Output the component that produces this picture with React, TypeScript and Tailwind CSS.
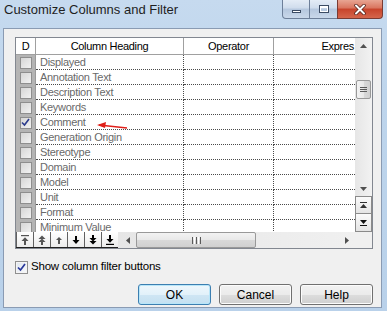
import React from "react";

const rows = [
  "Displayed",
  "Annotation Text",
  "Description Text",
  "Keywords",
  "Comment",
  "Generation Origin",
  "Stereotype",
  "Domain",
  "Model",
  "Unit",
  "Format",
  "Minimum Value",
];

function GridCheck({ checked }: { checked?: boolean }) {
  return (
    <div className="w-[12px] h-[12px] border border-[#8e8e8e] bg-[linear-gradient(135deg,#d6d6d6,#f2f2f2)] flex items-center justify-center">
      {checked && (
        <svg width="9" height="9" viewBox="0 0 9 9">
          <path d="M1 4.5 L3.5 7 L8 1" stroke="#2a3a8c" strokeWidth="1.6" fill="none" />
        </svg>
      )}
    </div>
  );
}

function Tri({ dir, color = "#3c3c3c" }: { dir: "up" | "down" | "left" | "right"; color?: string }) {
  const p =
    dir === "up"
      ? "M0 4 L3.5 0 L7 4 Z"
      : dir === "down"
      ? "M0 0 L7 0 L3.5 4 Z"
      : dir === "left"
      ? "M4 0 L4 7 L0 3.5 Z"
      : "M0 0 L0 7 L4 3.5 Z";
  const w = dir === "up" || dir === "down" ? 7 : 4;
  const h = dir === "up" || dir === "down" ? 4 : 7;
  return (
    <svg width={w} height={h} viewBox={`0 0 ${w} ${h}`}>
      <path d={p} fill={color} />
    </svg>
  );
}

function ToolIcon({ kind }: { kind: number }) {
  const gray = "#555";
  const black = "#000";
  const c = kind < 3 ? gray : black;
  let el: React.ReactNode = null;
  if (kind === 0)
    el = (
      <>
        <rect x="0" y="0" width="8" height="1.2" fill={c} />
        <path d="M0.5 6 L4 2.2 L7.5 6 Z" fill={c} />
        <rect x="3" y="6" width="2" height="4" fill={c} />
      </>
    );
  if (kind === 1)
    el = (
      <>
        <path d="M0.5 4 L4 0.5 L7.5 4 Z" fill={c} />
        <path d="M0.5 7 L4 3.5 L7.5 7 Z" fill={c} />
        <rect x="3" y="7" width="2" height="3" fill={c} />
      </>
    );
  if (kind === 2)
    el = (
      <>
        <path d="M1 5 L4 2 L7 5 Z" fill={c} />
        <rect x="3" y="5" width="2" height="4" fill={c} />
      </>
    );
  if (kind === 3)
    el = (
      <>
        <rect x="3" y="1" width="2" height="4" fill={c} />
        <path d="M0.5 5 L7.5 5 L4 9 Z" fill={c} />
      </>
    );
  if (kind === 4)
    el = (
      <>
        <rect x="3" y="0" width="2" height="3" fill={c} />
        <path d="M0.5 3 L7.5 3 L4 6.5 Z" fill={c} />
        <path d="M0.5 6 L7.5 6 L4 9.5 Z" fill={c} />
      </>
    );
  if (kind === 5)
    el = (
      <>
        <rect x="3" y="0" width="2" height="4" fill={c} />
        <path d="M0.5 4 L7.5 4 L4 7.8 Z" fill={c} />
        <rect x="0" y="8.8" width="8" height="1.2" fill={c} />
      </>
    );
  return (
    <svg width="8" height="10" viewBox="0 0 8 10">
      {el}
    </svg>
  );
}

function WinButton({ label, def }: { label: string; def?: boolean }) {
  return (
    <div
      className={
        "w-[73px] h-[21px] rounded-[3px] border flex items-center justify-center text-[12px] text-black " +
        (def
          ? "border-[#3c7fb1] shadow-[inset_0_0_0_1px_#b8e6f9] bg-[linear-gradient(180deg,#eef7fc_0%,#e2f1fa_50%,#cfe6f4_51%,#c4e0f1_100%)]"
          : "border-[#707070] shadow-[inset_0_0_0_1px_#fcfcfc] bg-[linear-gradient(180deg,#f2f2f2_0%,#ebebeb_50%,#dddddd_51%,#cfcfcf_100%)]")
      }
    >
      {label}
    </div>
  );
}

export default function App() {
  return (
    <div className="w-[387px] h-[311px] relative overflow-hidden flex flex-col bg-[linear-gradient(180deg,#c6daef_0%,#bed5ec_30%,#b9d1ea_100%)] font-['Liberation_Sans',Arial,sans-serif]">
      {/* Title bar */}
      <div className="h-[28px] flex items-start shrink-0">
        <div className="pl-[4px] pt-[2px] text-[13px] text-[#1e1e1e] leading-[16px]">
          Customize Columns and Filter
        </div>
        <div className="ml-auto mr-[4px] flex h-[19px]">
          <div className="w-[28px] h-[19px] border border-[#6d7f99] border-t-0 rounded-bl-[4px] bg-[linear-gradient(180deg,#e4ecf6_0%,#cfdcec_45%,#b5c7de_50%,#c9d8ea_100%)] flex items-center justify-center">
            <div className="w-[9px] h-[3px] bg-white border border-[#3b4b63] mt-[5px]" />
          </div>
          <div className="w-[27px] h-[19px] border-b border-[#6d7f99] bg-[linear-gradient(180deg,#e4ecf6_0%,#cfdcec_45%,#b5c7de_50%,#c9d8ea_100%)] flex items-center justify-center">
            <div className="w-[10px] h-[8px] border border-[#3b4b63] bg-transparent shadow-[inset_0_2px_0_#ffffff,inset_0_0_0_1px_#ffffff]" />
          </div>
          <div className="w-[46px] h-[19px] border border-[#7a3b33] border-t-0 rounded-br-[4px] bg-[linear-gradient(180deg,#e8a593_0%,#d9745e_45%,#c7432b_50%,#d5664c_100%)] flex items-center justify-center">
            <svg width="12" height="11" viewBox="0 0 12 11">
              <path d="M2 1.5 L10 9.5 M10 1.5 L2 9.5" stroke="#4a1a14" strokeWidth="3.4" strokeLinecap="round" />
              <path d="M2 1.5 L10 9.5 M10 1.5 L2 9.5" stroke="#ffffff" strokeWidth="2" strokeLinecap="round" />
            </svg>
          </div>
        </div>
      </div>

      {/* Client area */}
      <div className="ml-[3px] w-[379px] h-[280px] border border-[#8a9bb3] bg-[#f0f0f0] flex flex-col pl-[11px] pt-[8px] pr-[8px]">
        {/* Grid */}
        <div className="relative w-[358px] h-[212px] border border-[#828790] bg-white flex text-[11px] tracking-[-0.3px]">
          {/* main */}
          <div className="w-[339px] flex flex-col">
            {/* header */}
            <div className="h-[17px] flex border-b border-[#a0a0a0] bg-white text-black shrink-0">
              <div className="w-[20px] border-r border-[#a0a0a0] flex items-center justify-center">D</div>
              <div className="w-[148px] border-r border-[#a0a0a0] flex items-center justify-center">Column Heading</div>
              <div className="w-[90px] border-r border-[#a0a0a0] flex items-center justify-center">Operator</div>
              <div className="w-[81px] flex items-center justify-end pr-[1px] overflow-hidden">Expres</div>
            </div>
            {/* rows */}
            <div className="h-[177px] overflow-hidden flex flex-col shrink-0">
              {rows.map((r, i) => (
                <div key={r} className="h-[15px] flex shrink-0">
                  <div className="w-[20px] h-[15px] border-r border-[#9a9a9a] bg-[#b4b4b4] flex items-center justify-center">
                    <GridCheck checked={i === 4} />
                  </div>
                  <div className="w-[148px] border-r border-b border-dotted border-[#4a4a4a] flex items-center pl-[4px] text-[#6a6a6a] leading-[14px]">
                    {r}
                  </div>
                  <div className="w-[90px] border-r border-b border-dotted border-[#4a4a4a]" />
                  <div className="w-[81px] border-b border-dotted border-[#4a4a4a]" />
                </div>
              ))}
            </div>
            {/* bottom toolbar + hscroll */}
            <div className="h-[16px] flex shrink-0 bg-[#f0f0f0]">
              <div className="flex border-b border-[#202020]">
                {[0, 1, 2, 3, 4, 5].map((k) => (
                  <div
                    key={k}
                    className="w-[17px] h-[15px] bg-[linear-gradient(180deg,#ffffff,#ececec)] border-l border-[#606060] flex items-center justify-center"
                  >
                    <ToolIcon kind={k} />
                  </div>
                ))}
              </div>
              <div className="flex-1 flex items-center bg-[linear-gradient(90deg,#e6e6e6,#f0f0f0)] pl-[1px]">
                <div className="w-[17px] h-[16px] flex items-center justify-center">
                  <Tri dir="left" color="#505050" />
                </div>
                <div className="w-[120px] h-[16px] rounded-[2px] border border-[#999999] bg-[linear-gradient(180deg,#f3f3f3_0%,#e8e8e8_50%,#d9d9d9_51%,#d0d0d0_100%)] flex items-center justify-center">
                  <div className="flex gap-[1px]">
                    <div className="w-[1px] h-[7px] bg-[#5a5a5a]" />
                    <div className="w-[1px] h-[7px] bg-white" />
                    <div className="w-[1px] h-[7px] bg-[#5a5a5a]" />
                    <div className="w-[1px] h-[7px] bg-white" />
                    <div className="w-[1px] h-[7px] bg-[#5a5a5a]" />
                  </div>
                </div>
                <div className="flex-1" />
                <div className="w-[17px] h-[16px] flex items-center justify-center">
                  <Tri dir="right" color="#505050" />
                </div>
              </div>
            </div>
          </div>
          {/* vertical scrollbar */}
          <div className="w-[17px] flex flex-col bg-[linear-gradient(90deg,#e6e6e6,#f2f2f2)]">
            <div className="h-[16px] flex items-center justify-center shrink-0">
              <Tri dir="up" color="#505050" />
            </div>
            <div className="h-[26px] shrink-0" />
            <div className="h-[19px] mx-[1px] rounded-[2px] border border-[#999999] bg-[linear-gradient(90deg,#f3f3f3_0%,#e8e8e8_50%,#d9d9d9_51%,#d0d0d0_100%)] flex flex-col items-center justify-center gap-[1px] shrink-0">
              <div className="w-[7px] h-[1px] bg-[#5a5a5a]" />
              <div className="w-[7px] h-[1px] bg-[#5a5a5a]" />
              <div className="w-[7px] h-[1px] bg-[#5a5a5a]" />
            </div>
            <div className="flex-1" />
            <div className="h-[15px] flex items-center justify-center shrink-0">
              <Tri dir="down" color="#505050" />
            </div>
            <div className="h-[18px] border border-[#8a8a8a] bg-[linear-gradient(180deg,#fafafa,#e4e4e4)] flex flex-col items-center justify-center shrink-0">
              <div className="w-[7px] h-[1px] bg-[#303030] mb-[1px]" />
              <Tri dir="up" color="#303030" />
            </div>
            <div className="h-[18px] border border-t-0 border-[#8a8a8a] bg-[linear-gradient(180deg,#fafafa,#e4e4e4)] flex flex-col items-center justify-center shrink-0">
              <Tri dir="down" color="#101010" />
              <div className="w-[7px] h-[1px] bg-[#101010] mt-[1px]" />
            </div>
            <div className="h-[16px] shrink-0 bg-[#f0f0f0]" />
          </div>

          {/* red annotation arrow */}
          <svg className="absolute left-[81px] top-[83px]" width="32" height="10" viewBox="0 0 32 10">
            <path d="M2 4 L30 7" stroke="#e0201a" strokeWidth="1.4" />
            <path d="M0 4 L9 1 L8 7 Z" fill="#e0201a" />
          </svg>
        </div>

        {/* checkbox line */}
        <div className="mt-[11px] flex items-center h-[14px]">
          <div className="w-[13px] h-[13px] border border-[#8f8f8f] bg-[linear-gradient(135deg,#dfe6ef,#f8f9fb)] flex items-center justify-center shadow-[inset_0_0_0_1px_#f4f4f4]">
            <svg width="9" height="9" viewBox="0 0 9 9">
              <path d="M1 4.5 L3.5 7 L8 1" stroke="#28379a" strokeWidth="1.7" fill="none" />
            </svg>
          </div>
          <span className="ml-[3px] text-[11.5px] text-black tracking-[-0.2px]">Show column filter buttons</span>
        </div>

        {/* buttons */}
        <div className="mt-[10px] flex justify-end gap-[8px] pr-[0px]">
          <WinButton label="OK" def />
          <WinButton label="Cancel" />
          <WinButton label="Help" />
        </div>
      </div>
    </div>
  );
}
